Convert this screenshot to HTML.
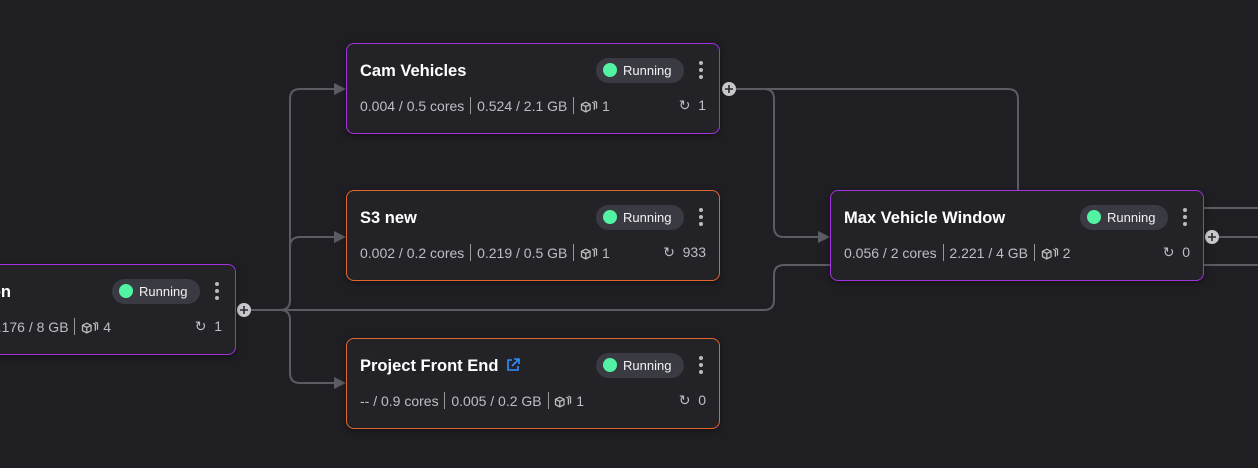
<!DOCTYPE html>
<html><head><style>
body{margin:0;width:1258px;height:468px;background:#1f1f23;overflow:hidden;position:relative;font-family:"Liberation Sans",sans-serif}
.card{position:absolute;width:372px;height:89px;background:#232327;border:1px solid #a032e0;border-radius:8px;box-shadow:0 2px 6px rgba(0,0,0,.4)}
.o{border-color:#e2672e}
.t{position:absolute;left:13px;top:18px;color:#fff;font-weight:bold;font-size:16.5px;white-space:nowrap}
.b{position:absolute;left:249px;top:14px;width:88px;height:25px;border-radius:13px;background:#3a3a43;color:#f2f2f2;font-size:13px;line-height:25px}
.b i{position:absolute;left:7px;top:5px;width:14px;height:14px;border-radius:50%;background:#52f3a2}
.b span{position:absolute;left:27px}
.d{position:absolute;left:352px;top:17px;width:4px}
.d u{display:block;width:4px;height:4px;border-radius:50%;background:#bbb;margin-bottom:3px}
.m{position:absolute;left:13px;top:53px;color:#bdbdc4;font-size:14px;white-space:nowrap}
.m s{display:inline-block;width:1px;height:17px;background:#999;vertical-align:-3px;margin:0 2px;text-decoration:none}
.r{position:absolute;right:13px;top:53px;color:#bdbdc4;font-size:14px}
svg.i{vertical-align:-3px}
</style></head><body>
<svg width="1258" height="468" style="position:absolute;left:0;top:0" fill="none" stroke="#5b5b63" stroke-width="2">
<path d="M250 310 H280 Q290 310 290 300 V99 Q290 89 300 89 H338"/>
<path d="M290 247 Q290 237 300 237 H338"/>
<path d="M280 310 Q290 310 290 320 V373 Q290 383 300 383 H338"/>
<path d="M250 310 H764 Q774 310 774 300 V275 Q774 265 784 265 H830"/>
<path d="M735 89 H764 Q774 89 774 99 V227 Q774 237 784 237 H822"/>
<path d="M735 89 H1008 Q1018 89 1018 99 V190"/>
<path d="M1203 208 H1258 M1218 237 H1258 M1203 265 H1258"/>
<g fill="#5b5b63" stroke="none"><path d="M346 89 l-12 -6 v12z M346 237 l-12 -6 v12z M346 383 l-12 -6 v12z M830 237 l-12 -6 v12z"/></g>
<g fill="#c8c8cc" stroke="none"><circle cx="244" cy="310" r="7"/><circle cx="729" cy="89" r="7"/><circle cx="1212" cy="237" r="7"/></g>
<g stroke="#2a2a2e" stroke-width="1.6"><path d="M240 310h8M244 306v8M725 89h8M729 85v8M1208 237h8M1212 233v8"/></g>
</svg>

<div class="card" style="left:-138px;top:264px">
<div class="t" style="left:-62px;width:210px;text-align:right">Application</div>
<div class="b"><i></i><span>Running</span></div><div class="d"><u></u><u></u><u></u></div>
<div class="m" style="left:-160px;width:408px;text-align:right">0.010 / 1 cores <s></s> 0.176 / 8 GB <s></s> <svg class="i" width="18" height="15" viewBox="0 0 16 14" stroke="#bbb" fill="none" stroke-width="1.2"><path d="M1 5l4-2 4 2v5l-4 2-4-2zM1 5l4 2 4-2M5 7v5M11 3l2 1v6M13 2l2 1v6"/></svg> 4</div>
<div class="r"><span style="font-size:14px">↻</span>&nbsp; 1</div>
</div>

<div class="card" style="left:346px;top:43px">
<div class="t">Cam Vehicles</div>
<div class="b"><i></i><span>Running</span></div><div class="d"><u></u><u></u><u></u></div>
<div class="m">0.004 / 0.5 cores <s></s> 0.524 / 2.1 GB <s></s> <svg class="i" width="18" height="15" viewBox="0 0 16 14" stroke="#bbb" fill="none" stroke-width="1.2"><path d="M1 5l4-2 4 2v5l-4 2-4-2zM1 5l4 2 4-2M5 7v5M11 3l2 1v6M13 2l2 1v6"/></svg> 1</div>
<div class="r"><span style="font-size:14px">↻</span>&nbsp; 1</div>
</div>

<div class="card o" style="left:346px;top:190px">
<div class="t">S3 new</div>
<div class="b"><i></i><span>Running</span></div><div class="d"><u></u><u></u><u></u></div>
<div class="m">0.002 / 0.2 cores <s></s> 0.219 / 0.5 GB <s></s> <svg class="i" width="18" height="15" viewBox="0 0 16 14" stroke="#bbb" fill="none" stroke-width="1.2"><path d="M1 5l4-2 4 2v5l-4 2-4-2zM1 5l4 2 4-2M5 7v5M11 3l2 1v6M13 2l2 1v6"/></svg> 1</div>
<div class="r"><span style="font-size:14px">↻</span>&nbsp; 933</div>
</div>

<div class="card o" style="left:346px;top:338px">
<div class="t">Project Front End <svg width="14" height="14" viewBox="0 0 14 14" fill="none" stroke="#2f8fff" stroke-width="1.6" style="vertical-align:-1px;margin-left:3px"><path d="M6 2H2v10h10V8M8 1h5v5M13 1L6 8"/></svg></div>
<div class="b"><i></i><span>Running</span></div><div class="d"><u></u><u></u><u></u></div>
<div class="m">-- / 0.9 cores <s></s> 0.005 / 0.2 GB <s></s> <svg class="i" width="18" height="15" viewBox="0 0 16 14" stroke="#bbb" fill="none" stroke-width="1.2"><path d="M1 5l4-2 4 2v5l-4 2-4-2zM1 5l4 2 4-2M5 7v5M11 3l2 1v6M13 2l2 1v6"/></svg> 1</div>
<div class="r"><span style="font-size:14px">↻</span>&nbsp; 0</div>
</div>

<div class="card" style="left:830px;top:190px">
<div class="t">Max Vehicle Window</div>
<div class="b"><i></i><span>Running</span></div><div class="d"><u></u><u></u><u></u></div>
<div class="m">0.056 / 2 cores <s></s> 2.221 / 4 GB <s></s> <svg class="i" width="18" height="15" viewBox="0 0 16 14" stroke="#bbb" fill="none" stroke-width="1.2"><path d="M1 5l4-2 4 2v5l-4 2-4-2zM1 5l4 2 4-2M5 7v5M11 3l2 1v6M13 2l2 1v6"/></svg> 2</div>
<div class="r"><span style="font-size:14px">↻</span>&nbsp; 0</div>
</div>
</body></html>
